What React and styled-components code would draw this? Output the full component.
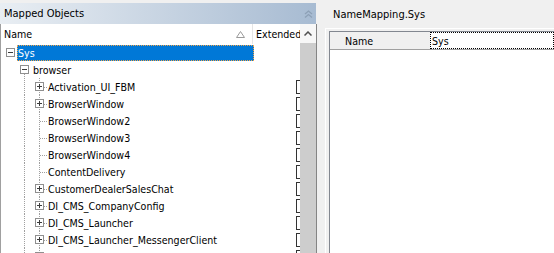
import styled, { createGlobalStyle } from 'styled-components';

const GlobalStyle = createGlobalStyle`
  html, body {
    margin: 0;
    padding: 0;
  }
  body {
    background: #f0f0f0;
    font-family: "DejaVu Sans Condensed", "Liberation Sans", sans-serif;
    font-size: 10.6px;
    color: #000;
    overflow: hidden;
  }
`;

const children = [
  { name: 'Activation_UI_FBM', expandable: true },
  { name: 'BrowserWindow', expandable: true },
  { name: 'BrowserWindow2' },
  { name: 'BrowserWindow3' },
  { name: 'BrowserWindow4' },
  { name: 'ContentDelivery' },
  { name: 'CustomerDealerSalesChat', expandable: true },
  { name: 'DI_CMS_CompanyConfig', expandable: true },
  { name: 'DI_CMS_Launcher', expandable: true },
  { name: 'DI_CMS_Launcher_MessengerClient', expandable: true },
  { name: 'DI_CMS_LauncherService', expandable: true },
];

const Expander = ({ x, open }) => (
  <g>
    <rect x={x + 0.5} y={4.5} width={8} height={8} fill="#fff" stroke="#8f8f8f" />
    <line x1={x + 2} y1={8.5} x2={x + 7} y2={8.5} stroke="#3c3c3c" />
    {!open && <line x1={x + 4.5} y1={6} x2={x + 4.5} y2={11} stroke="#3c3c3c" />}
  </g>
);

const dots = { stroke: '#a0a0a0', strokeDasharray: '1 1' };

const RootLines = () => (
  <Gutter width={16} height={17}>
    <Expander x={5} open />
  </Gutter>
);

const BranchLines = () => (
  <Gutter width={31} height={17}>
    <line x1={23.5} y1={13} x2={23.5} y2={17} {...dots} />
    <Expander x={19} open />
  </Gutter>
);

const LeafLines = ({ expandable }) => (
  <Gutter width={46} height={17}>
    <line x1={23.5} y1={0} x2={23.5} y2={17} {...dots} />
    <line x1={38.5} y1={0} x2={38.5} y2={17} {...dots} />
    <line x1={39} y1={9.5} x2={46} y2={9.5} {...dots} />
    {expandable && <Expander x={34} />}
  </Gutter>
);

const App = () => (
  <>
    <GlobalStyle />
    <Window>
      <LeftPane>
        <PaneHeader>
          <span>Mapped Objects</span>
          <svg width="9" height="8" viewBox="0 0 9 8">
            <polyline points="1,4 4.5,1 8,4" fill="none" stroke="#8da0b6" strokeWidth="1.3" />
            <polyline points="1,7.5 4.5,4.5 8,7.5" fill="none" stroke="#8da0b6" strokeWidth="1.3" />
          </svg>
        </PaneHeader>
        <TreeArea>
          <TreeBody>
            <ColumnHeader>
              <NameHead>
                <span>Name</span>
                <svg width="9" height="7" viewBox="0 0 9 7">
                  <polygon points="4.5,0.5 8.5,6.5 0.5,6.5" fill="none" stroke="#9a9a9a" />
                </svg>
              </NameHead>
              <ExtHead>Extended</ExtHead>
            </ColumnHeader>

            <Row>
              <NameCell>
                <RootLines />
                <Label $selected>Sys</Label>
              </NameCell>
              <ExtCell />
            </Row>
            <Row>
              <NameCell>
                <BranchLines />
                <Label>browser</Label>
              </NameCell>
              <ExtCell />
            </Row>
            {children.map((c) => (
              <Row key={c.name}>
                <NameCell>
                  <LeafLines expandable={c.expandable} />
                  <Label>{c.name}</Label>
                </NameCell>
                <ExtCell>
                  <Check />
                </ExtCell>
              </Row>
            ))}
          </TreeBody>
          <ScrollBar>
            <ScrollArrow>
              <svg width="8" height="5" viewBox="0 0 8 5">
                <polyline points="0.5,4.5 4,1 7.5,4.5" fill="none" stroke="#505050" strokeWidth="1.5" />
              </svg>
            </ScrollArrow>
            <Thumb />
          </ScrollBar>
        </TreeArea>
      </LeftPane>

      <RightPane>
        <Title>NameMapping.Sys</Title>
        <Inset>
          <Grid>
            <GridHeader>
              <GridHeadCell>Name</GridHeadCell>
              <GridValue>Sys</GridValue>
            </GridHeader>
          </Grid>
        </Inset>
      </RightPane>
    </Window>
  </>
);

const Window = styled.div`
  display: flex;
  width: 554px;
  height: 253px;
  overflow: hidden;
`;

const LeftPane = styled.div`
  width: 317px;
  padding-top: 3px;
  box-sizing: border-box;
  display: flex;
  flex-direction: column;
`;

const PaneHeader = styled.div`
  width: 316px;
  height: 21px;
  flex: none;
  box-sizing: border-box;
  padding: 0 3px 0 4px;
  display: flex;
  align-items: center;
  justify-content: space-between;
  background: linear-gradient(to right, #e9eef3, #a7bbd2);
  font-size: 11px;
`;

const TreeArea = styled.div`
  flex: 1;
  display: flex;
  border-left: 1px solid #a0a0a0;
  border-right: 1px solid #858585;
  min-height: 0;
`;

const TreeBody = styled.div`
  flex: 1;
  background: #fff;
  display: flex;
  flex-direction: column;
  overflow: hidden;
`;

const ColumnHeader = styled.div`
  height: 20px;
  flex: none;
  display: flex;
`;

const NameHead = styled.div`
  width: 252px;
  box-sizing: border-box;
  padding: 0 7px 0 3px;
  border-right: 1px solid #e5e5e5;
  display: flex;
  align-items: center;
  justify-content: space-between;
`;

const ExtHead = styled.div`
  flex: 1;
  padding-left: 3px;
  display: flex;
  align-items: center;
  white-space: nowrap;
  overflow: hidden;
`;

const Row = styled.div`
  height: 17px;
  flex: none;
  display: flex;
`;

const NameCell = styled.div`
  width: 253px;
  display: flex;
  align-items: stretch;
`;

const Gutter = styled.svg`
  flex: none;
  display: block;
`;

const Label = styled.div`
  box-sizing: border-box;
  margin: 1px 0 0;
  height: 16px;
  padding: 0 1px 0 0;
  display: flex;
  align-items: center;
  white-space: nowrap;
  border: 1px solid transparent;
  ${(p) =>
    p.$selected &&
    `
    flex: 1;
    background: #0078d7;
    color: #fff;
    border: 1px dotted #f2a54a;
  `}
`;

const ExtCell = styled.div`
  flex: 1;
  overflow: hidden;
  display: flex;
  align-items: center;
`;

const Check = styled.div`
  flex: none;
  margin-left: 42px;
  width: 12px;
  height: 12px;
  border: 1px solid #333;
  background: #fff;
`;

const ScrollBar = styled.div`
  width: 16px;
  display: flex;
  flex-direction: column;
`;

const ScrollArrow = styled.div`
  height: 19px;
  flex: none;
  background: #f7f7f7;
  display: flex;
  align-items: center;
  justify-content: center;
`;

const Thumb = styled.div`
  flex: 1;
  background: #cdcdcd;
`;

const RightPane = styled.div`
  flex: 1;
  display: flex;
  flex-direction: column;
  padding-left: 8px;
`;

const Title = styled.div`
  height: 28px;
  flex: none;
  padding-left: 8px;
  display: flex;
  align-items: center;
  font-size: 11px;
`;

const Inset = styled.div`
  flex: 1;
  display: flex;
  border-top: 1px solid #fff;
  border-left: 1px solid #fff;
  padding: 2px 0 0 3px;
`;

const Grid = styled.div`
  flex: 1;
  background: #fff;
  border-top: 1px solid #828790;
  border-left: 1px solid #828790;
`;

const GridHeader = styled.div`
  display: flex;
  height: 18px;
  border-bottom: 1px solid #a0a0a0;
  box-sizing: border-box;
`;

const GridHeadCell = styled.div`
  width: 100px;
  box-sizing: border-box;
  padding-left: 15px;
  background: #f0f0f0;
  display: flex;
  align-items: center;
`;

const GridValue = styled.div`
  flex: 1;
  border: 1px dotted #000;
  padding-left: 1px;
  display: flex;
  align-items: center;
`;

export default App;
